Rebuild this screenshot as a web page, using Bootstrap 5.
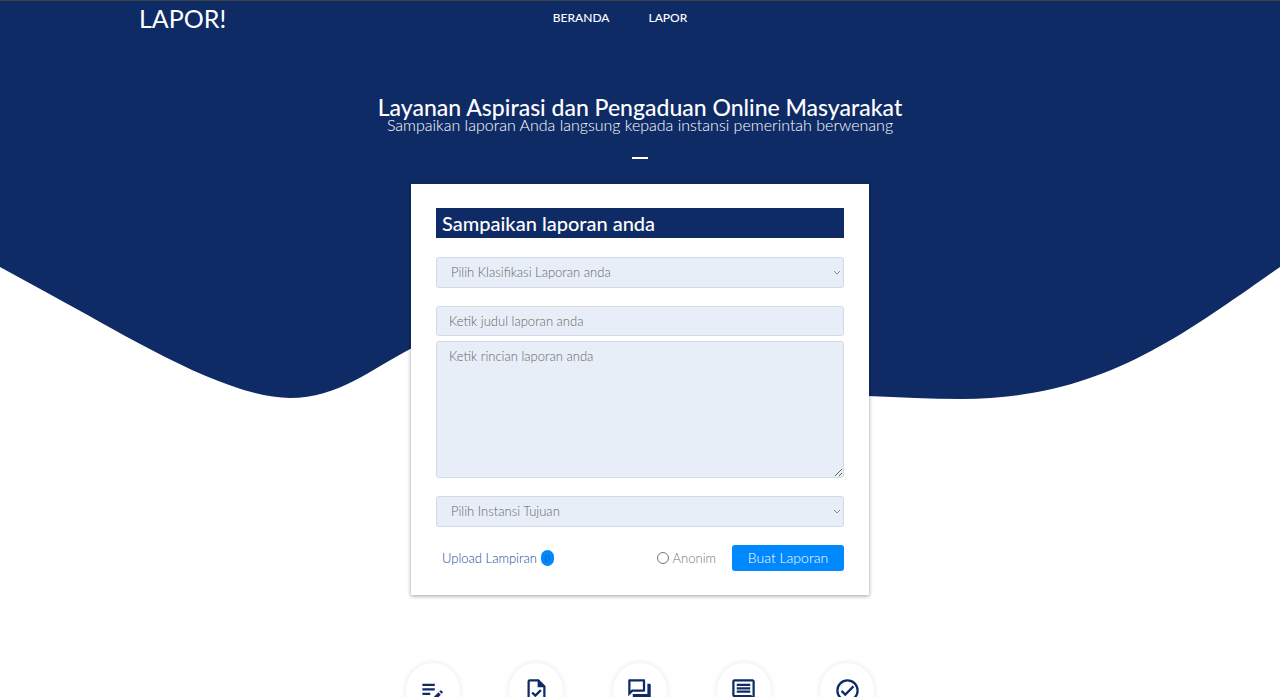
<!DOCTYPE html>
<html lang="id">
<head>
<meta charset="utf-8">
<meta name="viewport" content="width=device-width, initial-scale=1">
<title>LAPOR!</title>
<link href="https://cdn.jsdelivr.net/npm/bootstrap@5.3.0/dist/css/bootstrap.min.css" rel="stylesheet">
<style>
:root { --navy: #0f2b66; --field: #e8eef8; --azure: #0088ff; }
body {
  font-family: Lato, "Open Sans", sans-serif;
  font-size: 13px;
  line-height: 20px;
  background: #fff url("data:image/svg+xml,%3Csvg xmlns='http://www.w3.org/2000/svg' viewBox='0 0 1280 400' preserveAspectRatio='none'%3E%3Cpath fill='%230f2b66' d='M0 0V267L53 296C120 332 225 398 290 398C338 398 370 370 412 348C560 270 640 388 868 396C900 397 930 399 962 399C1100 399 1180 337 1280 267V0Z'/%3E%3C/svg%3E") no-repeat top / 100% 400px;
  border-top: 1px solid #3b4048;
}
.site-nav { --bs-navbar-padding-y: 0; height: 34px; }
.site-inner { max-width: 1002px; }
.brand-text { font-size: 25px; line-height: 34px; color: #fff; }
.brand-text:hover { color: #fff; }
.site-nav .nav-link { color: #fff; font-size: 12px; line-height: 18px; padding: 0; font-weight: 500; }
.menu { gap: 39px; padding-right: 40px; }
.hero { padding-top: 62px; }
.hero h1 { font-size: 23px; line-height: 20px; font-weight: 500; margin: 0; }
.hero p { font-size: 16px; line-height: 16px; font-weight: 300; margin: 0; }
.dash { width: 16px; height: 2px; background: #fff; margin: 24px auto 25px; }
.report { width: 100%; max-width: 458px; padding: 24px 25px; box-shadow: 0 1px 4px rgba(0,0,0,.4); }
.report h2 { background: var(--navy); font-size: 20px; line-height: 30px; font-weight: 500; padding: 0 6px; margin: 0 0 19px; color: #fff; }
.report .form-control, .report .form-select {
  font-size: 13px; line-height: 20px; font-weight: 300; color: #666;
  background-color: var(--field); border: 1px solid #d3dae6; border-radius: 3px; padding: 4px 12px; min-height: 0;
}
.report .form-control::placeholder { color: #666; }
.report .form-select {
  padding: 3px 14px 5px; height: 31px;
  background-image: url("data:image/svg+xml,%3Csvg xmlns='http://www.w3.org/2000/svg' viewBox='0 0 8 6'%3E%3Cpath fill='none' stroke='%23888' d='M1 1l3 3 3-3'/%3E%3C/svg%3E");
  background-size: 8px 6px; background-position: right 2px center;
}
.report .judul { margin: 18px 0 5px; }
.report .rincian { height: 137px; margin-bottom: 18px; }
.actions { margin-top: 18px; }
.upload { color: #24479b; gap: 4px; margin-left: 6px; font-weight: 300; }
.counter { background: var(--azure); color: #0b62c4; font-size: 10px; font-weight: 400; line-height: 16px; width: 13px; border-radius: 7px; }
.report .form-check-input { width: 12px; height: 12px; margin: 0; border: 1px solid #777; }
.anon { color: #777; font-weight: 300; }
.send, .send:hover { background: var(--azure); color: #fff; font-size: 14px; line-height: 26px; font-weight: 300; padding: 0; width: 112px; border: 0; border-radius: 3px; }
.steps { max-width: 518px; padding-top: 68px; }
.step-dot { width: 54px; height: 54px; background: #fff; box-shadow: 0 0 6px rgba(0,0,0,.1); color: var(--navy); }
.step-dot svg { width: 27px; height: 27px; fill: currentColor; }
</style>
</head>
<body>
<nav class="navbar site-nav">
  <div class="site-inner w-100 mx-auto row g-0 align-items-center">
    <div class="col"><a class="brand-text text-decoration-none" href="#">LAPOR!</a></div>
    <div class="menu col-auto d-flex">
      <a class="nav-link" href="#">BERANDA</a>
      <a class="nav-link" href="#lapor">LAPOR</a>
    </div>
    <div class="col"></div>
  </div>
</nav>
<main>
  <header class="hero text-center text-white">
    <h1>Layanan Aspirasi dan Pengaduan Online Masyarakat</h1>
    <p>Sampaikan laporan Anda langsung kepada instansi pemerintah berwenang</p>
    <div class="dash"></div>
  </header>
  <form class="report bg-white mx-auto" id="lapor">
    <h2>Sampaikan laporan anda</h2>
    <select class="form-select" aria-label="Klasifikasi laporan"><option>Pilih Klasifikasi Laporan anda</option></select>
    <input class="form-control judul" type="text" aria-label="Judul laporan" placeholder="Ketik judul laporan anda">
    <textarea class="form-control rincian" aria-label="Rincian laporan" placeholder="Ketik rincian laporan anda"></textarea>
    <select class="form-select" aria-label="Instansi tujuan"><option>Pilih Instansi Tujuan</option></select>
    <div class="actions d-flex align-items-center">
      <a class="upload text-decoration-none d-flex align-items-center me-auto" href="#">Upload Lampiran <span class="counter text-center">0</span></a>
      <input class="form-check-input" type="radio" id="anonim">
      <label class="anon ms-1 me-3" for="anonim">Anonim</label>
      <button class="btn send" type="submit">Buat Laporan</button>
    </div>
  </form>
  <section class="steps mx-auto row row-cols-5 g-0">
    <div class="col d-flex justify-content-center"><div class="step-dot rounded-circle d-flex align-items-center justify-content-center"><svg viewBox="0 0 24 24"><path d="M3 10h11v2H3v-2zm0-2h11V6H3v2zm0 8h7v-2H3v2zm15.01-3.13.71-.71a1 1 0 0 1 1.41 0l.71.71a1 1 0 0 1 0 1.41l-.71.71-2.12-2.12zm-.71.71-5.3 5.3V21h2.12l5.3-5.3-2.12-2.12z"/></svg></div></div>
    <div class="col d-flex justify-content-center"><div class="step-dot rounded-circle d-flex align-items-center justify-content-center"><svg viewBox="0 0 24 24"><path fill-rule="evenodd" d="M14 2H6a2 2 0 0 0-2 2v16c0 1.1.89 2 2 2h12a2 2 0 0 0 2-2V8l-6-6zm4 18H6V4h7v5h5v11zM8.82 13.05 7.4 14.46 10.94 18l5.66-5.66-1.41-1.41-4.24 4.24-2.13-2.12z"/></svg></div></div>
    <div class="col d-flex justify-content-center"><div class="step-dot rounded-circle d-flex align-items-center justify-content-center"><svg viewBox="0 0 24 24"><path d="M15 4v7H5.17L4 12.17V4h11m1-2H3c-.55 0-1 .45-1 1v14l4-4h10c.55 0 1-.45 1-1V3c0-.55-.45-1-1-1zm5 4h-2v9H6v2c0 .55.45 1 1 1h11l4 4V7c0-.55-.45-1-1-1z"/></svg></div></div>
    <div class="col d-flex justify-content-center"><div class="step-dot rounded-circle d-flex align-items-center justify-content-center"><svg viewBox="0 0 24 24"><path d="M21.99 4c0-1.1-.89-2-1.99-2H4c-1.1 0-2 .9-2 2v12c0 1.1.9 2 2 2h14l4 4-.01-18zM20 4v13.17L18.83 16H4V4h16zM6 12h12v2H6zm0-3h12v2H6zm0-3h12v2H6z"/></svg></div></div>
    <div class="col d-flex justify-content-center"><div class="step-dot rounded-circle d-flex align-items-center justify-content-center"><svg viewBox="0 0 24 24"><path d="M12 2a10 10 0 1 0 0 20 10 10 0 0 0 0-20zm0 18a8 8 0 1 1 0-16 8 8 0 0 1 0 16zm4.59-12.42L10 14.17l-2.59-2.58L6 13l4 4 8-8-1.41-1.42z"/></svg></div></div>
  </section>
</main>
<script src="https://cdn.jsdelivr.net/npm/bootstrap@5.3.0/dist/js/bootstrap.bundle.min.js"></script>
</body>
</html>
